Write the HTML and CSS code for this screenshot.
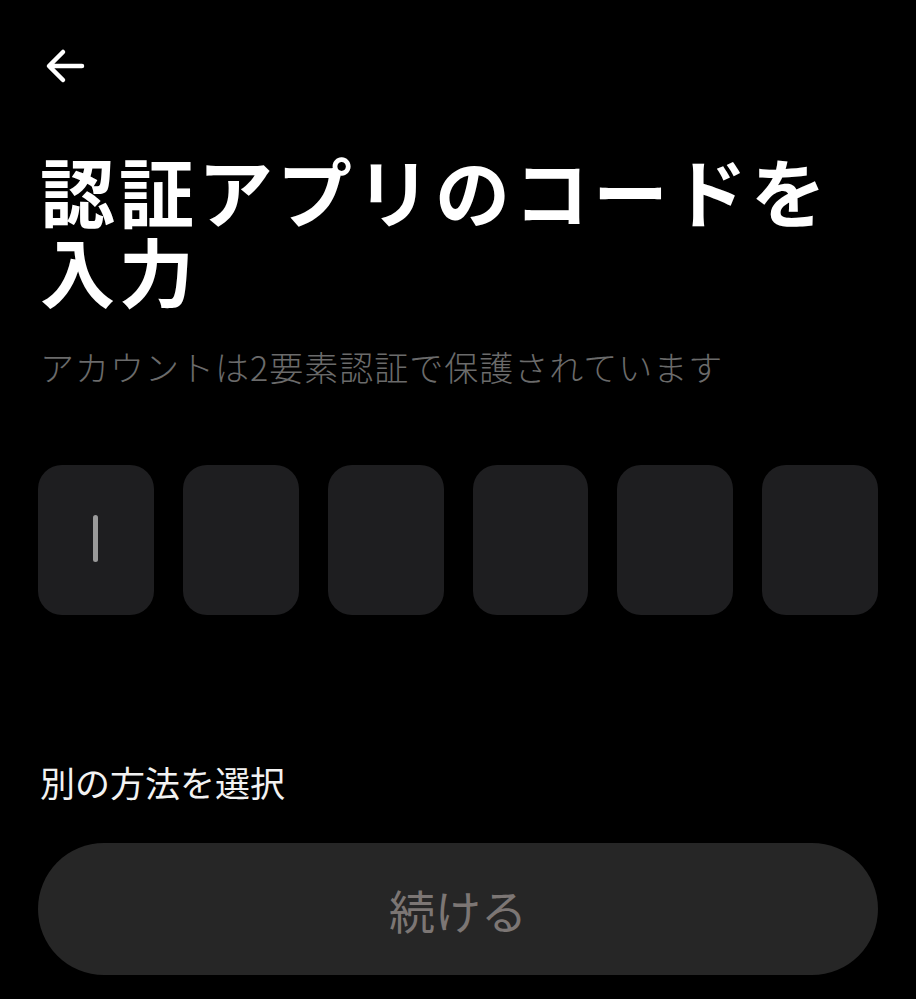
FILE: index.html
```html
<!DOCTYPE html>
<html lang="ja">
<head>
<meta charset="utf-8">
<link rel="stylesheet" href="styles.css">
</head>
<body>
<div class="screen">
  <div class="topbar">
    <svg class="back" width="44" height="40" viewBox="0 0 44 40">
      <path d="M40 20 H8 M21 6 L7 20 L21 34" fill="none" stroke="#fff" stroke-width="4.5" stroke-linecap="round" stroke-linejoin="round"/>
    </svg>
  </div>
  <h1 class="title">認証アプリのコードを入力</h1>
  <p class="subtitle">アカウントは2要素認証で保護されています</p>
  <div class="code">
    <div class="cell"><span class="cursor"></span></div>
    <div class="cell"></div>
    <div class="cell"></div>
    <div class="cell"></div>
    <div class="cell"></div>
    <div class="cell"></div>
  </div>
  <div class="spacer"></div>
  <div class="alt">別の方法を選択</div>
  <button class="continue">続ける</button>
</div>
</body>
</html>
```
FILE: styles.css
```css
html, body {
  margin: 0;
  padding: 0;
  background: #000;
}
body {
  font-family: "Noto Sans CJK JP", "Noto Sans", sans-serif;
  color: #fff;
}
.screen {
  box-sizing: border-box;
  height: 999px;
  padding: 0 38px 24px;
  display: flex;
  flex-direction: column;
}
.topbar {
  height: 150px;
  padding-top: 46px;
  box-sizing: border-box;
}
.back {
  display: block;
  margin-left: 4px;
}
.title {
  margin: 0;
  font-size: 75px;
  line-height: 80px;
  font-weight: 700;
  letter-spacing: 4px;
  padding-left: 2px;
}
.subtitle {
  margin: 33px 0 0;
  font-size: 34px;
  line-height: 48px;
  font-weight: 300;
  letter-spacing: 1px;
  color: #6b6b6b;
  padding-left: 2px;
}
.code {
  margin-top: 74px;
  display: grid;
  grid-template-columns: repeat(6, 1fr);
  gap: 29px;
}
.cell {
  height: 150px;
  background: #1e1e20;
  border-radius: 24px;
  display: flex;
  align-items: center;
  justify-content: center;
}
.cursor {
  width: 5px;
  height: 47px;
  background: #9a9a9a;
  border-radius: 3px;
  margin-bottom: 4px;
}
.spacer {
  flex: 1;
}
.alt {
  font-size: 35px;
  line-height: 48px;
  font-weight: 400;
  color: #f2f2f2;
  padding-left: 2px;
  margin-bottom: 37px;
}
.continue {
  height: 132px;
  border: none;
  border-radius: 66px;
  background: #262626;
  color: #7c7674;
  font-family: "Noto Sans CJK JP", "Noto Sans", sans-serif;
  font-size: 46px;
  font-weight: 400;
  width: 100%;
}
```
